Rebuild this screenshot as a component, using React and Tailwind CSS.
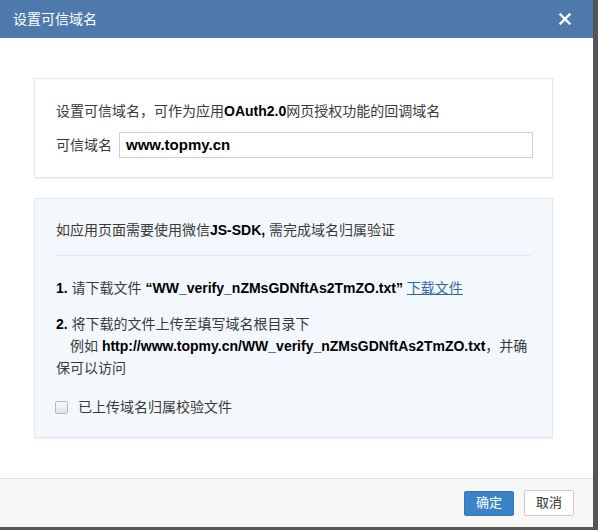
export default function App() {
  const font = { fontFamily: '"Liberation Sans", "Noto Sans CJK SC", sans-serif' }
  return (
    <div className="w-[598px] h-[530px] bg-[#555555] overflow-hidden" style={font}>
      <div className="w-[593px] h-[527px] bg-white flex flex-col">
        {/* Header */}
        <div className="h-[38px] bg-[#4e79ad] flex items-center justify-between pl-[13px] pr-[22px] shrink-0">
          <span className="text-[14px] text-white">设置可信域名</span>
          <svg width="12" height="12" viewBox="0 0 12 12" className="text-white">
            <path d="M1.5 1.5 L10.5 10.5 M10.5 1.5 L1.5 10.5" stroke="currentColor" strokeWidth="2.4" strokeLinecap="square" />
          </svg>
        </div>

        {/* Body */}
        <div className="flex-1 px-[34px] pt-[40px] text-[14px] text-[#3a3a3a] leading-[22px]">
          <div className="w-[519px] border border-[#e8e8e8] shadow-[0_1px_1px_rgba(0,0,0,0.05)] pt-[21px] pb-[19px] px-[21px]">
            <p>设置可信域名，可作为应用<b className="text-black">OAuth2.0</b>网页授权功能的回调域名</p>
            <div className="flex items-center mt-[10px] -mr-[2px]">
              <span className="w-[63px] shrink-0">可信域名</span>
              <div className="w-[414px] shrink-0 h-[26px] border border-[#cfcfcf] flex items-center px-[6px] font-bold text-[15px] text-black">
                www.topmy.cn
              </div>
            </div>
          </div>

          <div className="w-[519px] mt-[20px] bg-[#f3f8fd] border border-[#e0e9f2] shadow-[0_1px_1px_rgba(0,0,0,0.05)] pt-[20px] pb-[19px] px-[21px]">
            <p>如应用页面需要使用微信<b className="text-black">JS-SDK,</b> 需完成域名归属验证</p>
            <div className="h-px bg-[#e2e8ef] mt-[14px] mb-[21px]" />
            <p>
              <b className="text-black">1.</b> 请下载文件 <b className="text-black">“WW_verify_nZMsGDNftAs2TmZO.txt”</b>{' '}
              <a className="text-[#3467a6] underline decoration-1">下载文件</a>
            </p>
            <p className="mt-[14px]">
              <b className="text-black">2.</b> 将下载的文件上传至填写域名根目录下
              <br />
              {'\u3000'}例如 <b className="text-black">http://www.topmy.cn/WW_verify_nZMsGDNftAs2TmZO.txt</b>，并确
              <br />
              保可以访问
            </p>
            <label className="flex items-center mt-[17px]">
              <span className="w-[13px] h-[13px] rounded-[2px] border border-[#b8b8b8] bg-gradient-to-b from-[#fafafa] to-[#e2e2e2] ml-[-1px] mr-[10px]" />
              <span>已上传域名归属校验文件</span>
            </label>
          </div>
        </div>

        {/* Footer */}
        <div className="h-[49px] shrink-0 bg-[#f7f7f7] border-t border-[#e3e3e3] flex items-center justify-end gap-[10px] pr-[19px]">
          <button className="w-[50px] h-[25px] bg-[#3b83c9] border border-[#3576b8] rounded-[2px] text-white text-[13px]">确定</button>
          <button className="w-[50px] h-[26px] bg-white border border-[#cccccc] rounded-[2px] text-[#333] text-[13px]">取消</button>
        </div>
      </div>
    </div>
  )
}
